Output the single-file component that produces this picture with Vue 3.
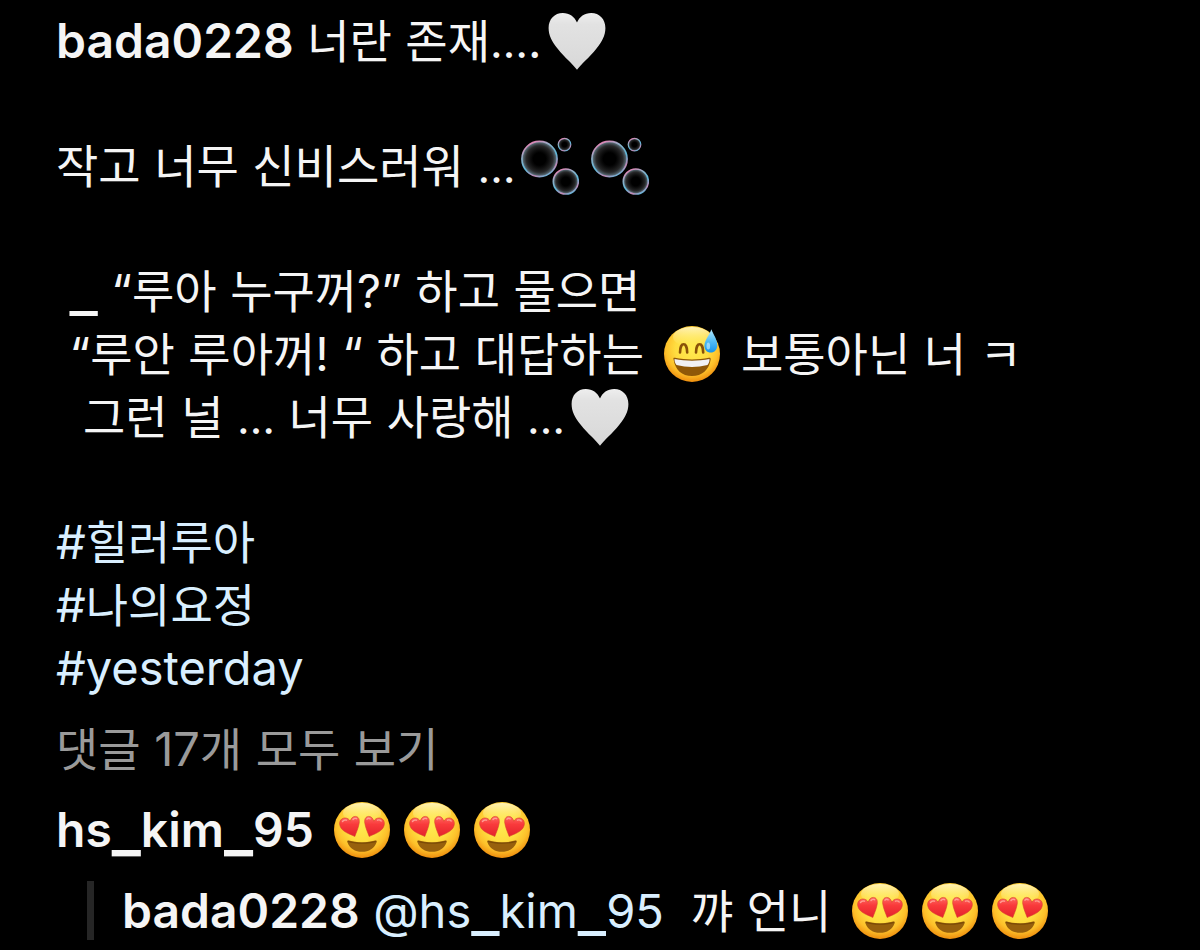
<script setup>
import { h } from 'vue'

const EMOJI = {
  '🤍': 'heart',
  '🫧': 'bubbles',
  '😅': 'sweat',
  '😍': 'love',
}

const TOKEN = /([\uAC00-\uD7A3\u3131-\u318E]+)|(🤍|🫧|😅|😍)|(\s+)|(_)|(…)|([^\s_…\uAC00-\uD7A3\u3131-\u318E🤍🫧😅😍]+)/gu

function tokens(text) {
  return [...text.matchAll(TOKEN)].map((m) => {
    if (m[1]) return { kind: 'ko', text: m[1] }
    if (m[2]) return { kind: 'emoji', text: m[2], icon: '#' + EMOJI[m[2]] }
    if (m[3]) return { kind: 'space', text: m[3] }
    if (m[4]) return { kind: 'underscore', text: m[4] }
    if (m[5]) return { kind: 'ellipsis', text: m[5] }
    return { kind: 'latin', text: m[6] }
  })
}

const RichText = (props) =>
  tokens(props.text).map((t) => {
    if (t.kind === 'space') return t.text
    if (t.kind === 'emoji') {
      return h('svg', { class: 'emoji', viewBox: '0 0 58 58', role: 'img', 'aria-label': t.text }, [
        h('use', { href: t.icon }),
      ])
    }
    return h('span', { class: t.kind }, t.text)
  })
RichText.props = ['text']

const author = 'bada0228'
const paragraphs = [
  ['작고 너무 신비스러워 …🫧🫧'],
  [' _ “루아 누구꺼?” 하고 물으면', ' “루안 루아꺼! “ 하고 대답하는 😅 보통아닌 너 ㅋ', '  그런 널 … 너무 사랑해 …🤍'],
]
const tags = ['#힐러루아', '#나의요정', '#yesterday']
</script>

<template>
  <svg class="defs" aria-hidden="true">
    <defs>
      <radialGradient id="skin" cx="0.5" cy="0.4" r="0.6">
        <stop offset="0" stop-color="#ffec50" />
        <stop offset="0.5" stop-color="#ffdd40" />
        <stop offset="0.78" stop-color="#fdc02a" />
        <stop offset="1" stop-color="#ee8d0e" />
      </radialGradient>
      <linearGradient id="shine" x1="0" y1="0" x2="0" y2="1">
        <stop offset="0" stop-color="#fffbd8" stop-opacity="0.8" />
        <stop offset="1" stop-color="#fff17a" stop-opacity="0" />
      </linearGradient>
      <linearGradient id="pearl" x1="0" y1="0" x2="0" y2="1">
        <stop offset="0" stop-color="#eeeeee" />
        <stop offset="0.2" stop-color="#e2e2e2" />
        <stop offset="1" stop-color="#d8d8d8" />
      </linearGradient>
      <linearGradient id="ruby" x1="0" y1="0" x2="0" y2="1">
        <stop offset="0" stop-color="#ff6a62" />
        <stop offset="0.4" stop-color="#f93a3b" />
        <stop offset="1" stop-color="#e3222c" />
      </linearGradient>
      <linearGradient id="drop" x1="0" y1="0" x2="0" y2="1">
        <stop offset="0" stop-color="#b5e9fd" />
        <stop offset="0.5" stop-color="#55bdf5" />
        <stop offset="1" stop-color="#1593ea" />
      </linearGradient>
      <linearGradient id="rim" x1="0.2" y1="0" x2="0.7" y2="1">
        <stop offset="0" stop-color="#f07cb0" />
        <stop offset="0.3" stop-color="#8fb0c8" />
        <stop offset="0.6" stop-color="#5cb8da" />
        <stop offset="0.85" stop-color="#c488b4" />
        <stop offset="1" stop-color="#5fb9dc" />
      </linearGradient>
      <radialGradient id="film">
        <stop offset="0.35" stop-color="#3a3a3a" stop-opacity="0" />
        <stop offset="0.75" stop-color="#4d4e50" stop-opacity="0.5" />
        <stop offset="1" stop-color="#7796a6" stop-opacity="0.9" />
      </radialGradient>

      <symbol id="heart" viewBox="0 0 58 58">
        <path d="M29 57.8C25 52.2 17 46 9.500 36.500C4 29.500 0.600 23.500 0.600 16C0.600 7 6.500 0.900 14.800 0.900C21.500 0.900 26.500 4.500 29 10.500C31.500 4.500 36.500 0.900 43.200 0.900C51.500 0.900 57.400 7 57.400 16C57.400 23.500 54 29.500 48.500 36.500C41 46 33 52.200 29 57.800Z" fill="url(#pearl)" />
      </symbol>

      <symbol id="bubbles" viewBox="0 0 58 58">
        <g fill="url(#film)" stroke="url(#rim)">
          <circle cx="18.500" cy="22" r="17.600" stroke-width="1.600" />
          <circle cx="43.500" cy="7.600" r="6.300" stroke-width="1.200" />
          <circle cx="44.800" cy="44.500" r="12.500" stroke-width="1.600" />
        </g>
      </symbol>

      <symbol id="face" viewBox="0 0 58 58">
        <circle cx="29" cy="29" r="28" fill="url(#skin)" />
        <ellipse cx="29" cy="12" rx="19" ry="10" fill="url(#shine)" />
      </symbol>

      <symbol id="love" viewBox="0 0 58 58">
        <use href="#face" />
        <path d="M21.800 35.500C17.500 33.200 8.800 31 7 24.800C5.600 20 8.500 17 12 17C14.500 17 16.300 18.300 17.200 20.300C18 17.300 19.700 15.400 22.300 15.400C25.300 15.400 26.800 18.200 26.200 22C25.400 27.200 23.200 31.500 21.800 35.500Z" fill="url(#ruby)" stroke="#d7402a" stroke-width="0.600" />
        <path d="M36.200 35.500C40.500 33.200 49.200 31 51 24.800C52.400 20 49.500 17 46 17C43.500 17 41.700 18.300 40.800 20.300C40 17.300 38.300 15.400 35.700 15.400C32.700 15.400 31.200 18.200 31.800 22C32.600 27.200 34.800 31.500 36.200 35.500Z" fill="url(#ruby)" stroke="#d7402a" stroke-width="0.600" />
        <path d="M9.500 20.500Q11 18.300 13.500 19.200M20 18.500Q21.500 16.700 23.500 17.700M34 18.200Q35.200 16.600 37.200 17.800M44.500 19.200Q46.500 18.300 48.200 20" fill="none" stroke="#ff9d93" stroke-width="1.400" stroke-linecap="round" />
        <path d="M14.300 41C13.800 39.700 14.800 39.200 16 39.600C24 42 34 42 42 39.600C43.200 39.200 44.200 39.700 43.700 41C41.500 47.500 36 50.800 29 50.800C22 50.800 16.500 47.500 14.300 41Z" fill="#97600d" />
        <path d="M15 40.400C22 42.800 36 42.800 43 40.400" fill="none" stroke="#7b4a07" stroke-width="1.200" />
      </symbol>

      <symbol id="sweat" viewBox="0 0 58 58">
        <use href="#face" />
        <path d="M17 27.500C17 16.500 24.200 16.500 24.200 27.500M33 27.500C33 16.500 40.200 16.500 40.200 27.500" fill="none" stroke="#8a5208" stroke-width="2.600" stroke-linecap="round" />
        <path d="M10.500 34C10 33 11 32.500 12 32.800C23 35 35 35 46 32.800C47 32.500 48 33 47.700 34.500C46 45 39 51 29 51C19 51 12 45 10.500 34Z" fill="#8f5808" />
        <path d="M11.500 34C23 36.300 35 36.300 46.500 34C46.500 36.800 45.800 38.500 44.500 40C34 42.500 24 42.500 13.500 40C12.200 38.500 11.500 36.800 11.500 34Z" fill="#f1f1f4" />
        <path d="M48.300 4.200C50.500 9.500 54.300 14.500 54.300 20C54.300 24.600 51.500 27.600 47.700 27.600C43.800 27.600 41.200 24.600 41.400 20.500C41.700 15 46.500 10 48.300 4.200Z" fill="url(#drop)" />
        <ellipse cx="45.300" cy="21" rx="1.800" ry="3.500" fill="#b9eaff" opacity="0.7" />
      </symbol>
    </defs>
  </svg>

  <main class="post">
    <article class="caption">
      <p>
        <a class="user" href="#author"><RichText :text="author" /></a><RichText text=" 너란 존재….🤍" />
      </p>
      <p v-for="(lines, i) in paragraphs" :key="i">
        <span v-for="line in lines" :key="line" class="line"><RichText :text="line" /></span>
      </p>
      <p>
        <span v-for="tag in tags" :key="tag" class="line"><a class="link" href="#tag"><RichText :text="tag" /></a></span>
      </p>
    </article>

    <button type="button" class="more"><RichText text="댓글 17개 모두 보기" /></button>

    <p class="comment">
      <a class="user" href="#commenter"><RichText text="hs_kim_95" /></a><RichText text=" 😍😍😍" />
    </p>
    <p class="comment reply">
      <a class="user" href="#author"><RichText :text="author" /></a>{{ ' ' }}<a class="link" href="#commenter"><RichText text="@hs_kim_95" /></a><RichText text="  꺄 언니 😍😍😍" />
    </p>
  </main>
</template>

<style>
html,
body {
  background: #000;
}
</style>

<style scoped>
.defs {
  position: absolute;
  width: 0;
  height: 0;
}

.post {
  display: flex;
  flex-direction: column;
  align-items: flex-start;
  gap: 18px;
  padding: 9px 56px 0;
  color: #f5f5f5;
  font-family: Inter, "Noto Sans CJK KR", sans-serif;
  font-size: 48px;
  line-height: 63px;
}

.caption {
  display: flex;
  flex-direction: column;
  gap: 62px;
}

p {
  margin: 0;
  white-space: pre-wrap;
}

.line {
  display: block;
}

a {
  color: inherit;
  text-decoration: none;
}

.user {
  font-weight: 600;
}

.link {
  color: #d9efff;
}

.more {
  padding: 0;
  border: 0;
  background: none;
  color: #9a9a9a;
  font: inherit;
  white-space: pre-wrap;
  text-align: left;
  cursor: pointer;
}

.reply {
  margin: 2px 0 0 31px;
  padding-left: 28px;
  border-left: 7px solid #262626;
  line-height: 59px;
}

.post :deep(.ko) {
  font-family: "Noto Sans CJK KR", sans-serif;
  font-size: 46px;
  font-weight: 400;
  line-height: 1;
}

.post :deep(.latin) {
  font-size: 47px;
  line-height: 1;
}

.post .user :deep(.latin) {
  font-size: 48px;
}

.post :deep(.ellipsis) {
  font-size: 44px;
  line-height: 1;
}

.post :deep(.underscore) {
  font-size: 62px;
  line-height: 40px;
  vertical-align: -3px;
}

.post :deep(.emoji) {
  width: 58px;
  height: 58px;
  margin: 0 6px;
  vertical-align: -12px;
}
</style>
